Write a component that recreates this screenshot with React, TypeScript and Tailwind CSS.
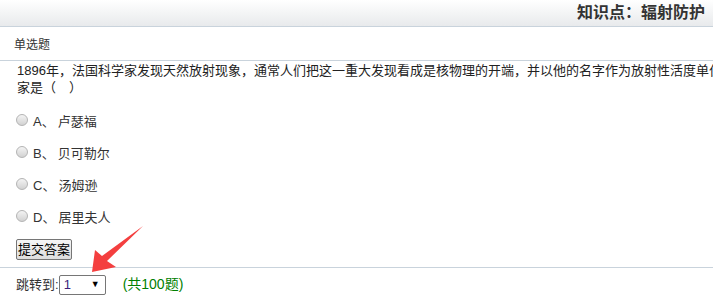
import React from "react";

const font = { fontFamily: '"Liberation Sans", "Noto Sans CJK SC", sans-serif' };

function Radio() {
  return (
    <span className="inline-block w-[12px] h-[12px] rounded-full border border-[#b4b4b4] bg-gradient-to-b from-[#f4f4f4] to-[#d2d2d2] mt-[-4px]" />
  );
}

function Option({ letter, text }: { letter: string; text: string }) {
  return (
    <div className="h-[32px] flex items-center pl-[16px] text-[13px] text-[#333]">
      <Radio />
      <span className="ml-[5px]">{letter}、</span>
      <span className="ml-[3px]">{text}</span>
    </div>
  );
}

export default function App() {
  return (
    <div className="relative w-[713px] h-[304px] overflow-hidden bg-white" style={font}>
      <div className="h-[27px] border-b border-[#c9d3dc] bg-gradient-to-b from-white to-[#e8eaec] flex items-center justify-end pr-[8px]">
        <span className="text-[16px] font-bold text-[#333] leading-none">知识点：辐射防护</span>
      </div>
      <div className="h-[34px] border-b border-[#c9d3dc] pl-[14px] pt-[10px] text-[12px] text-[#333] leading-[16px]">
        单选题
      </div>
      <div className="pl-[17px] pt-[1px] text-[13px] leading-[17px] text-[#222] whitespace-nowrap">
        <div>1896年，法国科学家发现天然放射现象，通常人们把这一重大发现看成是核物理的开端，并以他的名字作为放射性活度单位的科学</div>
        <div>家是（　）</div>
      </div>
      <div className="mt-[10px]">
        <Option letter="A" text="卢瑟福" />
        <Option letter="B" text="贝可勒尔" />
        <Option letter="C" text="汤姆逊" />
        <Option letter="D" text="居里夫人" />
      </div>
      <div className="pl-[16px] pt-[5px] pb-[7px] border-b border-[#c9d3dc]">
        <div className="w-[56px] h-[21px] border border-[#767676] rounded-[2px] bg-gradient-to-b from-[#f6f6f6] to-[#dddddd] flex items-center justify-center text-[13px] text-black leading-none">
          提交答案
        </div>
      </div>
      <div className="flex items-center pl-[16px] pt-[6px] text-[13px] text-[#333]">
        <span>跳转到:</span>
        <div className="w-[47px] h-[20px] border border-[#767676] rounded-[2px] flex items-center justify-between pl-[4px] pr-[5px] bg-white">
          <span className="text-[13px] text-[#3d1f7a]">1</span>
          <span className="text-[9px] text-black">▼</span>
        </div>
        <span className="ml-[17px] text-[14px] text-[#008000]">(共100题)</span>
      </div>
      <svg className="absolute top-0 left-0 pointer-events-none" width="713" height="304" viewBox="0 0 713 304">
        <polygon points="92,272 95,250 102,256 143,226 107,261 116,267" fill="#f43f3f" />
      </svg>
    </div>
  );
}
